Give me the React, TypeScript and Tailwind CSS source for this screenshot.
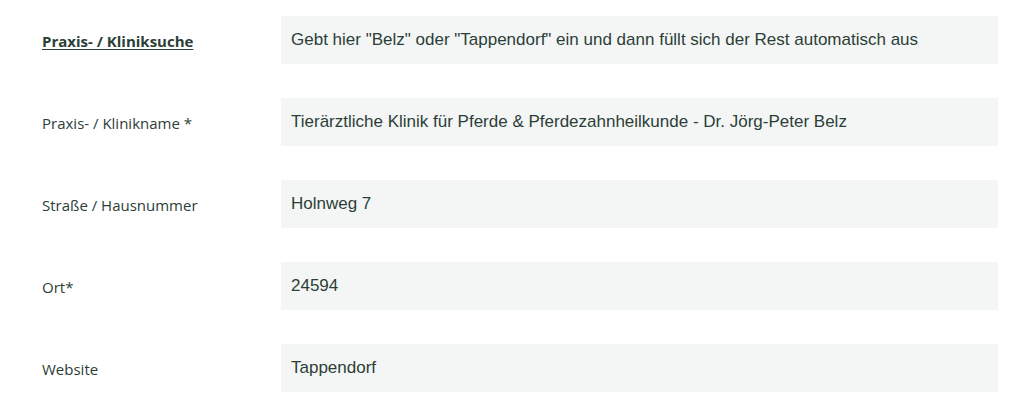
import React from 'react';

const rows = [
  { label: 'Praxis- / Kliniksuche', value: 'Gebt hier "Belz" oder "Tappendorf" ein und dann füllt sich der Rest automatisch aus', strong: true },
  { label: 'Praxis- / Klinikname *', value: 'Tierärztliche Klinik für Pferde & Pferdezahnheilkunde - Dr. Jörg-Peter Belz' },
  { label: 'Straße / Hausnummer', value: 'Holnweg 7' },
  { label: 'Ort*', value: '24594' },
  { label: 'Website', value: 'Tappendorf' },
];

const App: React.FC = () => {
  return (
    <div className="w-[1030px] h-[419px] bg-white pt-4 text-[#2c3e38]">
      <div className="flex flex-col gap-[34px]">
        {rows.map((r) => (
          <div key={r.label} className="flex items-center h-[48px]">
            <div className="w-[281px] pl-[42px] pt-[3px] font-['Open_Sans',sans-serif] text-[15px]">
              {r.strong ? <span className="font-bold underline underline-offset-2">{r.label}</span> : r.label}
            </div>
            <div className="w-[717px] h-[48px] bg-[#f4f6f5] flex items-center pl-[10px] font-['Liberation_Sans',Arial,sans-serif] text-[17px]">
              {r.value}
            </div>
          </div>
        ))}
      </div>
    </div>
  );
};

export default App;
